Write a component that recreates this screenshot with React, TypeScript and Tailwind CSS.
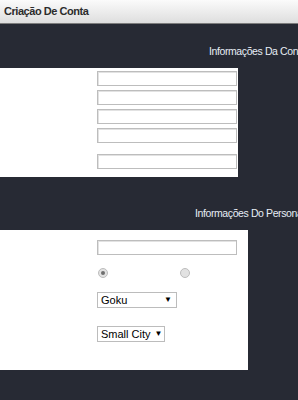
const field = "block h-[15px] w-[140px] border border-[#bdbdbd] bg-white shadow-[inset_1px_1px_0_#e2e2e2]";

const Radio = ({ checked }: { checked?: boolean }) => (
    <span className="flex size-[10px] items-center justify-center rounded-full border border-[#bdbdbd] bg-[#e2e2e2]">
        {checked && <span className="size-[4px] rounded-full bg-[#6f6f6f]" />}
    </span>
);

const Select = ({ value, width }: { value: string; width: string }) => (
    <div className={`flex h-[16px] items-center justify-between gap-[4px] whitespace-nowrap border border-[#bcbcbc] bg-white pl-[3px] pr-[4px] text-[11px] text-black ${width}`}>
        <span>{value}</span>
        <span className="text-[8px] leading-none">▼</span>
    </div>
);

export default function App() {
    return (
        <div className="flex h-[400px] w-[298px] flex-col overflow-hidden bg-[#272a34] font-['Liberation_Sans',Arial,sans-serif]">
            <div className="flex h-[24px] shrink-0 items-center border-b border-[#7c7c7c] bg-gradient-to-b from-[#fbfbfb] to-[#dedede] pl-[4px]">
                <span className="text-[11px] font-bold tracking-[-0.45px] text-[#2c2c2c]">Criação De Conta</span>
            </div>

            <div className="mt-[21px] h-[13px] whitespace-nowrap pl-[209px] text-[10.5px] leading-[13px] tracking-[-0.4px] text-[#e6edf5]">
                Informações Da Conta
            </div>

            <div className="mt-[10px] flex h-[109px] w-[238px] flex-col gap-[4px] bg-white pl-[97px] pt-[3px]">
                <input className={field} />
                <input className={field} />
                <input className={field} />
                <input className={field} />
                <input className={`${field} mt-[7px]`} />
            </div>

            <div className="mt-[30px] h-[13px] whitespace-nowrap pl-[195px] text-[10.5px] leading-[13px] tracking-[-0.4px] text-[#e6edf5]">
                Informações Do Personagem
            </div>

            <div className="mt-[10px] flex h-[140px] w-[248px] flex-col bg-white pl-[97px] pt-[10px]">
                <input className={field} />
                <div className="mt-[13px] flex items-center pl-[0.5px]">
                    <Radio checked />
                    <span className="ml-[72px]">
                        <Radio />
                    </span>
                </div>
                <div className="mt-[14px]">
                    <Select value="Goku" width="w-[80px]" />
                </div>
                <div className="mt-[18px]">
                    <Select value="Small City" width="w-[68px]" />
                </div>
            </div>
        </div>
    );
}
